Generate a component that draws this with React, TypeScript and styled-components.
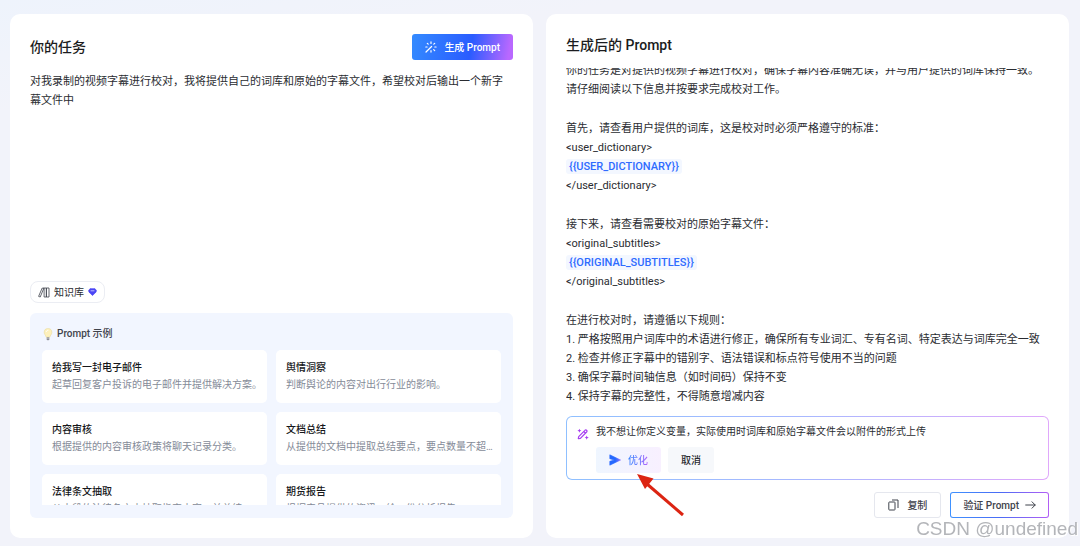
import React from "react";
import styled, { createGlobalStyle, css } from "styled-components";

const GlobalStyle = createGlobalStyle`
  *, *::before, *::after { box-sizing: border-box; }
  body {
    margin: 0;
    background: #f2f3fa;
    color: #2a2c31;
    font-family: Roboto, "Noto Sans CJK SC", sans-serif;
    font-size: 11px;
    line-height: 19px;
  }
  button, textarea { font: inherit; color: inherit; }
  h2, h3, p, ul { margin: 0; padding: 0; }
`;

const Page = styled.main`
  display: grid;
  grid-template-columns: repeat(2, minmax(0, 1fr));
  gap: 13px;
  height: 100vh;
  min-height: 540px;
  padding: 14px 11px 8px 10px;
  background: linear-gradient(170deg, #eef3fc 0, #f2f3fa 110px);
`;

const Panel = styled.section`
  display: flex;
  flex-direction: column;
  min-height: 0;
  padding: 20px;
  border-radius: 10px;
  background: #fff;
`;

const PanelHeader = styled.header`
  display: flex;
  align-items: center;
  justify-content: space-between;
  margin-bottom: 12px;
`;

const PanelTitle = styled.h2`
  font-size: 14px;
  line-height: 22px;
  font-weight: 500;
  color: #1b1c20;
`;

const buttonBase = css`
  display: inline-flex;
  align-items: center;
  justify-content: center;
  height: 26px;
  padding: 0 12px;
  border: 1px solid transparent;
  border-radius: 3px;
  font-size: 10px;
  font-weight: 500;
  white-space: nowrap;
  cursor: pointer;
  svg { flex: none; }
`;

const GenerateButton = styled.button`
  ${buttonBase}
  gap: 7px;
  padding: 0 13px;
  border: 0;
  color: #fff;
  background: linear-gradient(100deg, #348bff 0%, #2a5cff 58%, #b968ff 95%);
`;

const TaskInput = styled.textarea`
  flex: 1;
  min-height: 0;
  width: 100%;
  margin: 0 0 10px;
  padding: 0;
  border: 0;
  outline: 0;
  resize: none;
  overflow: hidden;
  background: transparent;
  line-height: 19px;
`;

const KnowledgeButton = styled.button`
  display: inline-flex;
  align-items: center;
  align-self: flex-start;
  gap: 4px;
  height: 22px;
  margin-bottom: 10px;
  padding: 0 7px;
  border: 1px solid #ebedf3;
  border-radius: 8px;
  background: #fff;
  font-size: 10px;
  cursor: pointer;
`;

const Examples = styled.section`
  display: flex;
  flex-direction: column;
  height: 205px;
  padding: 12px 12px 13px;
  border-radius: 6px;
  background: #f2f6ff;
`;

const ExamplesTitle = styled.h3`
  display: flex;
  align-items: center;
  gap: 3px;
  margin-bottom: 7px;
  font-size: 10px;
  line-height: 18px;
  font-weight: 500;
  color: #3f434c;
`;

const ExampleGrid = styled.ul`
  display: grid;
  grid-template-columns: repeat(2, minmax(0, 1fr));
  gap: 9px;
  flex: 1;
  min-height: 0;
  overflow: hidden;
  list-style: none;
`;

const ExampleCard = styled.li`
  height: 53px;
  padding: 9px 6px 10px 10px;
  border-radius: 5px;
  background: #fff;
  font-size: 10px;
  line-height: 17px;
  white-space: nowrap;
  overflow: hidden;
`;

const ExampleName = styled.p`
  font-weight: 500;
  color: #16171a;
`;

const ExampleText = styled.p`
  color: #858b98;
`;

const PromptBody = styled.div`
  display: flex;
  flex-direction: column;
  justify-content: flex-end;
  gap: 20px;
  flex: 1;
  min-height: 0;
  margin-bottom: 10px;
  overflow: hidden;
`;

const Line = styled.p`
  white-space: nowrap;
`;

const Variable = styled.span`
  padding: 1px 3px;
  border-radius: 3px;
  background: #f3f7ff;
  color: #2e6bff;
  font-weight: 500;
`;

const gradientBorder = (colors: string) => css`
  border: 1px solid transparent;
  background: linear-gradient(#fff, #fff) padding-box, linear-gradient(90deg, ${colors}) border-box;
`;

const RefineBox = styled.form`
  display: grid;
  grid-template-columns: 12px minmax(0, 1fr);
  column-gap: 7px;
  height: 64px;
  margin-bottom: 12px;
  padding: 5px 10px;
  border-radius: 6px;
  ${gradientBorder("#8fc0ff, #a9b8ff 50%, #e0a8fb")}
`;

const RefineIcon = styled.span`
  display: flex;
  padding-top: 6px;
`;

const RefineInput = styled.textarea`
  display: block;
  width: 100%;
  height: 19px;
  margin: 0 0 6px;
  padding: 0;
  border: 0;
  outline: 0;
  resize: none;
  overflow: hidden;
  background: transparent;
  font-size: 10px;
  line-height: 19px;
`;

const Actions = styled.div<{ $end?: boolean }>`
  display: flex;
  gap: ${(p) => (p.$end ? 9 : 7)}px;
  justify-content: ${(p) => (p.$end ? "flex-end" : "flex-start")};
`;

const OptimizeButton = styled.button`
  ${buttonBase}
  gap: 7px;
  padding: 0 13px;
  border: 0;
  background: linear-gradient(90deg, #eff6ff, #f8f0ff);
`;

const GradientText = styled.span`
  background: linear-gradient(90deg, #3a86ff, #6f7bff 55%, #b667fb);
  background-clip: text;
  color: transparent;
`;

const CancelButton = styled.button`
  ${buttonBase}
  padding: 0 13px;
  border: 0;
  background: #f6f8fb;
`;

const CopyButton = styled.button`
  ${buttonBase}
  gap: 8px;
  padding: 0 13px;
  border-color: #e5e7ee;
  background: #fff;
  color: #3f434c;
`;

const VerifyButton = styled.button`
  ${buttonBase}
  gap: 6px;
  color: #3f434c;
  ${gradientBorder("#3f92ff, #4a6cf5 50%, #b35ff5")}
`;

const ArrowMark = styled.svg`
  position: absolute;
  left: 100%;
  top: 100%;
  margin: 1px 0 0 -24px;
  pointer-events: none;
`;

const Anchor = styled.div`
  position: relative;
  display: flex;
`;

const Watermark = styled.div`
  position: fixed;
  right: 2px;
  bottom: 5px;
  font-family: "Liberation Sans", sans-serif;
  font-size: 19px;
  line-height: 24px;
  color: rgba(160, 162, 168, 0.8);
  text-shadow: 1px 1px 0 #fff;
  pointer-events: none;
`;

const WandIcon = () => (
  <svg width="12" height="12" viewBox="0 0 12 12" fill="none" stroke="#fff" strokeWidth="1.2" strokeLinecap="round">
    <path d="M1 11 6.600 5.500M6 .9v1.500M2.300 2.300l.9.9M.8 6h1.300M9.700 2.300l-.9.9M9.800 6h1.300M8.700 8.700l1 1M6 9.700v1.400" />
  </svg>
);

const BooksIcon = () => (
  <svg width="12" height="11" viewBox="0 0 12 11" fill="none" stroke="#3f434c" strokeWidth="0.8" strokeLinejoin="round">
    <path d="M.6 9.400 4.200 1l1.500.6L2.200 10zM6.100 1h2.300v9H6.100zM8.400 1h2.600v9H8.400zM5 1h1.100" />
  </svg>
);

const GemIcon = () => (
  <svg width="9" height="8" viewBox="0 0 9 8">
    <path d="M2 .7h5L8.500 2.700 7.800 4.300 4.500 7.500 1.200 4.300.5 2.700z" fill="#4b45f5" stroke="#4b45f5" strokeWidth=".7" strokeLinejoin="round" />
    <path d="M3 2.800h3" stroke="#c9c8ff" strokeWidth=".9" strokeLinecap="round" />
  </svg>
);

const BulbIcon = () => (
  <svg width="12" height="13" viewBox="0 0 12 13">
    <path d="M6 .6a3.800 3.800 0 0 0-3.800 3.900c0 2 1.700 2.700 2 4.700h3.600c.3-2 2-2.700 2-4.700A3.800 3.800 0 0 0 6 .6z" fill="#fdf0bb" stroke="#eadb9c" strokeWidth=".6" />
    <path d="M4.300 3.600C4.500 2.700 5.200 2.200 6 2.200" stroke="#fff" strokeWidth="1" fill="none" strokeLinecap="round" />
    <path d="M4.700 9.300h2.600v1.900L6.600 12.200H5.400l-.7-1z" fill="#8e8f96" />
    <path d="M4.700 10.300h2.600" stroke="#d2d3d8" strokeWidth=".5" />
  </svg>
);

const MagicPenIcon = () => (
  <svg width="12" height="12" viewBox="0 0 12 12" fill="none" stroke="#a63df0" strokeWidth="1.2" strokeLinejoin="round" strokeLinecap="round">
    <path d="M1.300 10.700 1.700 8.600 7.900 2.300a1.100 1.100 0 0 1 1.700 0 1.100 1.100 0 0 1 0 1.700L3.400 10.300zM6.800 3.500 8.400 5.100" />
    <path d="M2.400.7 3 2.100l1.400.6L3 3.300 2.400 4.700 1.800 3.300.4 2.700 1.800 2.100zM9.700 7.500l.6 1.500 1.500.6-1.500.6-.6 1.500-.6-1.500-1.500-.6 1.500-.6z" fill="#a63df0" stroke="none" />
  </svg>
);

const SendIcon = () => (
  <svg width="12" height="12" viewBox="0 0 12 12">
    <defs>
      <linearGradient id="send" x1="0" x2="1">
        <stop offset=".5" stopColor="#2468ff" />
        <stop offset="1" stopColor="#8a70ff" />
      </linearGradient>
    </defs>
    <path d="M.8.8 11.600 6 .8 11.200V7.300L5.200 6 .8 4.700z" fill="url(#send)" stroke="url(#send)" strokeWidth=".6" strokeLinejoin="round" />
  </svg>
);

const CopyIcon = () => (
  <svg width="11" height="12" viewBox="0 0 11 12" fill="none" stroke="#3f434c" strokeWidth="1" strokeLinejoin="round">
    <rect x=".8" y="3" width="6.200" height="8" rx=".6" />
    <path d="M4 1h6v8" />
  </svg>
);

const RightArrowIcon = () => (
  <svg width="11" height="10" viewBox="0 0 11 10" fill="none" stroke="#3f434c" strokeWidth="1" strokeLinecap="round" strokeLinejoin="round">
    <path d="M.7 5h9.500M7 1.800 10.200 5 7 8.200" />
  </svg>
);

const examples = [
  ["给我写一封电子邮件", "起草回复客户投诉的电子邮件并提供解决方案。"],
  ["舆情洞察", "判断舆论的内容对出行行业的影响。"],
  ["内容审核", "根据提供的内容审核政策将聊天记录分类。"],
  ["文档总结", "从提供的文档中提取总结要点，要点数量不超…"],
  ["法律条文抽取", "从大段的法律条文中抽取指定内容，并总结"],
  ["期货报告", "根据产品提供的资讯，给一份分析报告"],
];

const paragraphs: string[][] = [
  [
    "你的任务是对提供的视频字幕进行校对，确保字幕内容准确无误，并与用户提供的词库保持一致。",
    "请仔细阅读以下信息并按要求完成校对工作。",
  ],
  [
    "首先，请查看用户提供的词库，这是校对时必须严格遵守的标准：",
    "<user_dictionary>",
    "{{USER_DICTIONARY}}",
    "</user_dictionary>",
  ],
  [
    "接下来，请查看需要校对的原始字幕文件：",
    "<original_subtitles>",
    "{{ORIGINAL_SUBTITLES}}",
    "</original_subtitles>",
  ],
  [
    "在进行校对时，请遵循以下规则：",
    "1. 严格按照用户词库中的术语进行修正，确保所有专业词汇、专有名词、特定表达与词库完全一致",
    "2. 检查并修正字幕中的错别字、语法错误和标点符号使用不当的问题",
    "3. 确保字幕时间轴信息（如时间码）保持不变",
    "4. 保持字幕的完整性，不得随意增减内容",
  ],
];

export default function App() {
  return (
    <>
      <GlobalStyle />
      <Page>
        <Panel>
          <PanelHeader>
            <PanelTitle id="task-title">你的任务</PanelTitle>
            <GenerateButton type="button">
              <WandIcon />
              生成 Prompt
            </GenerateButton>
          </PanelHeader>
          <TaskInput
            aria-labelledby="task-title"
            spellCheck={false}
            defaultValue="对我录制的视频字幕进行校对，我将提供自己的词库和原始的字幕文件，希望校对后输出一个新字幕文件中"
          />
          <KnowledgeButton type="button">
            <BooksIcon />
            知识库
            <GemIcon />
          </KnowledgeButton>
          <Examples>
            <ExamplesTitle>
              <BulbIcon />
              Prompt 示例
            </ExamplesTitle>
            <ExampleGrid>
              {examples.map(([name, text]) => (
                <ExampleCard key={name}>
                  <ExampleName>{name}</ExampleName>
                  <ExampleText>{text}</ExampleText>
                </ExampleCard>
              ))}
            </ExampleGrid>
          </Examples>
        </Panel>

        <Panel>
          <PanelHeader>
            <PanelTitle>生成后的 Prompt</PanelTitle>
          </PanelHeader>
          <PromptBody>
            {paragraphs.map((lines) => (
              <div key={lines[0]}>
                {lines.map((line) => (
                  <Line key={line}>{line.startsWith("{{") ? <Variable>{line}</Variable> : line}</Line>
                ))}
              </div>
            ))}
          </PromptBody>
          <RefineBox onSubmit={(e) => e.preventDefault()}>
            <RefineIcon>
              <MagicPenIcon />
            </RefineIcon>
            <div>
              <RefineInput
                aria-label="优化"
                rows={1}
                spellCheck={false}
                defaultValue="我不想让你定义变量，实际使用时词库和原始字幕文件会以附件的形式上传"
              />
              <Actions>
                <Anchor>
                  <OptimizeButton type="submit">
                    <SendIcon />
                    <GradientText>优化</GradientText>
                  </OptimizeButton>
                  <ArrowMark width="48" height="44" viewBox="0 0 48 44" aria-hidden="true">
                    <path d="M46 41 10 10" stroke="#dc2412" strokeWidth="3" />
                    <path d="M0 0 16.500 4.500 8 15z" fill="#dc2412" />
                  </ArrowMark>
                </Anchor>
                <CancelButton type="button">取消</CancelButton>
              </Actions>
            </div>
          </RefineBox>
          <Actions $end>
            <CopyButton type="button">
              <CopyIcon />
              复制
            </CopyButton>
            <VerifyButton type="button">
              验证 Prompt
              <RightArrowIcon />
            </VerifyButton>
          </Actions>
        </Panel>
      </Page>
      <Watermark>CSDN @undefined</Watermark>
    </>
  );
}
